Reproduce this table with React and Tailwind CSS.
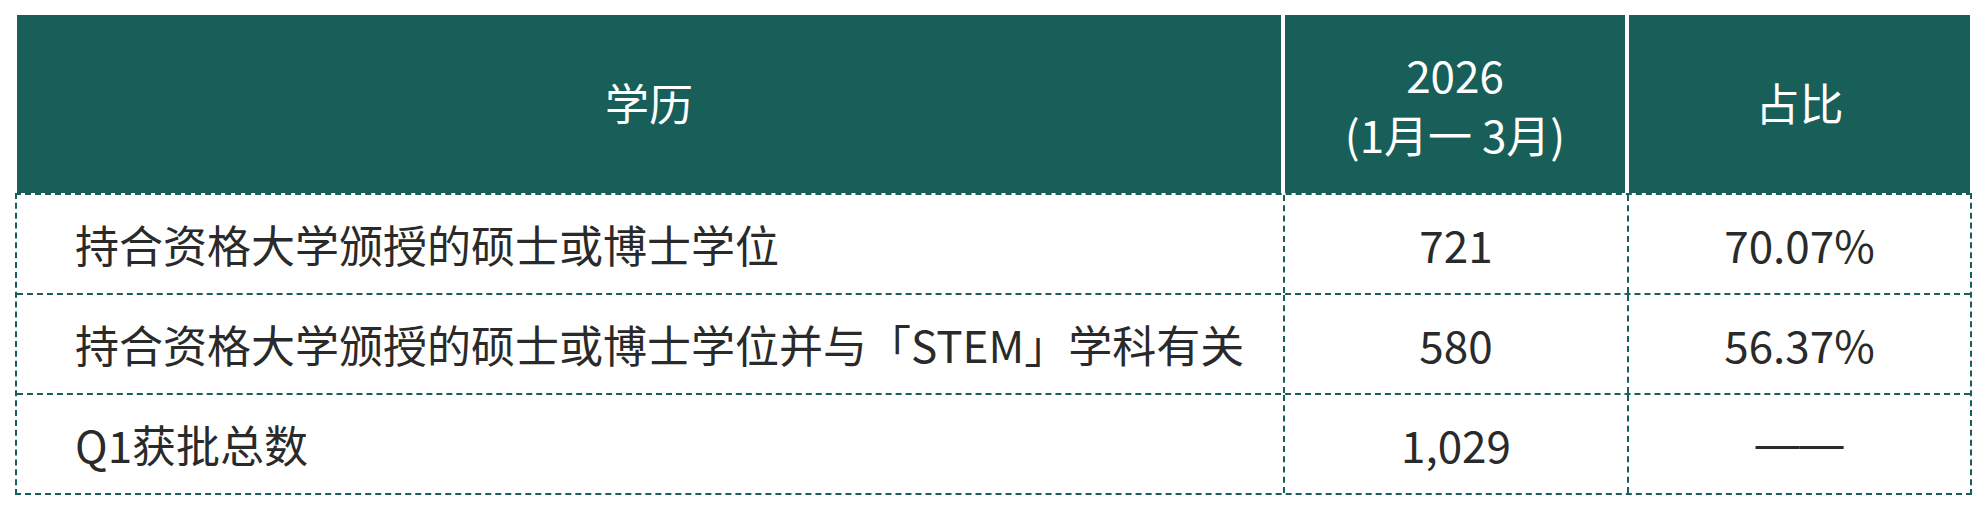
import React from "react";

const rows = [
  { label: "持合资格大学颁授的硕士或博士学位", count: "721", ratio: "70.07%" },
  { label: "持合资格大学颁授的硕士或博士学位并与「STEM」学科有关", count: "580", ratio: "56.37%" },
  { label: "Q1获批总数", count: "1,029", ratio: "——", dash: true },
];

export default function App() {
  return (
    <div
      className="w-[1988px] h-[510px] bg-white pt-[15px] pl-[15px]"
      style={{ fontFamily: '"Noto Sans CJK SC", "Noto Sans", sans-serif' }}
    >
      <div className="w-[1957px]">
        {/* Header */}
        <div className="flex h-[178px] mx-[2px] text-white text-[44px] leading-[60px]">
          <div className="w-[1264px] bg-[#185f59] flex items-center justify-center pb-[4px]">学历</div>
          <div className="w-[4px] bg-white" />
          <div className="w-[340px] bg-[#185f59] flex flex-col items-center justify-center">
            <div>2026</div>
            <div>(1月一 3月)</div>
          </div>
          <div className="w-[4px] bg-white" />
          <div className="flex-1 bg-[#185f59] flex items-center justify-center pb-[4px]">占比</div>
        </div>

        {/* Body */}
        <div className="border-2 border-dashed border-[#185f59] text-[44px] text-[#2a2a2a]">
          {rows.map((r, i) => (
            <div
              key={i}
              className={
                "flex " + (i > 0 ? "h-[100px] border-t-2 border-dashed border-[#185f59]" : "h-[98px]")
              }
            >
              <div className="w-[1266px] flex items-center pl-[58px]">{r.label}</div>
              <div className="w-[344px] flex items-center justify-center border-l-2 border-dashed border-[#185f59]">
                {r.count}
              </div>
              <div className="flex-1 flex items-center justify-center border-l-2 border-dashed border-[#185f59]">
                {r.dash ? (
                  <span className="font-['Liberation_Sans',sans-serif] font-light">{r.ratio}</span>
                ) : (
                  r.ratio
                )}
              </div>
            </div>
          ))}
        </div>
      </div>
    </div>
  );
}
